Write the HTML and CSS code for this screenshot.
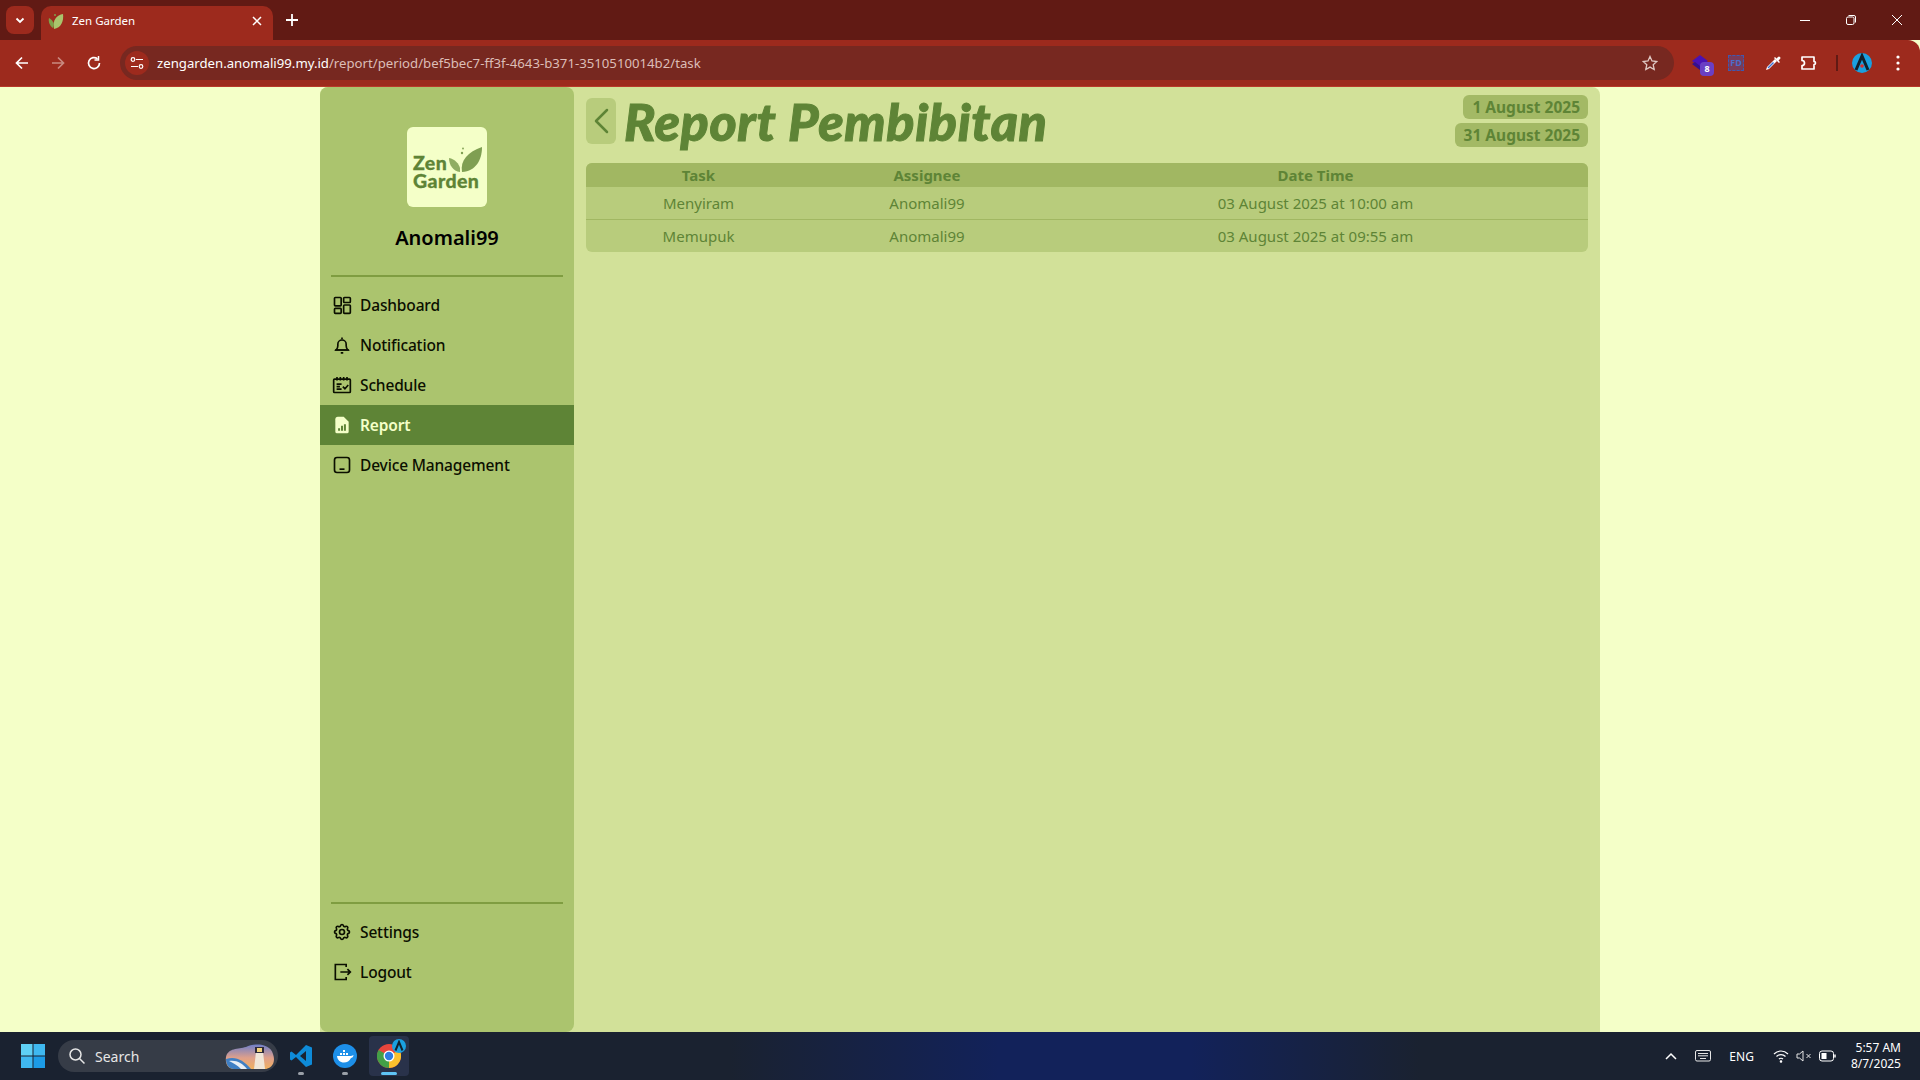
FILE: index.html
```html
<!DOCTYPE html>
<html lang="en">
<head>
    <meta charset="UTF-8">
    <meta name="viewport" content="width=device-width, initial-scale=1.0">
    <title>Zen Garden</title>
    <link rel="stylesheet" href="styles.css">
</head>
<body>
    <div class="screen">
        <div class="tab-strip">
            <button class="tab-search">
                <svg width="12" height="12" viewBox="0 0 12 12" fill="none" stroke="#fff" stroke-width="1.8"><path d="M2.5 4.5 6 8l3.5-3.5"/></svg>
            </button>
            <div class="tab">
                <svg class="tab-icon" width="18" height="18" viewBox="0 0 18 18"><path d="M7 17C14 16 17 9 16 2 10 3 5 8 7 17Z" fill="#a9c46c"/><path d="M6 16C3 14 1 10 2 6c2 1 4 3 5 6Z" fill="#7fa04a"/><circle cx="8" cy="3" r="1" fill="#7fa04a"/></svg>
                <span class="tab-title">Zen Garden</span>
                <svg class="tab-close" width="10" height="10" viewBox="0 0 10 10" stroke="#fff" stroke-width="1.5"><path d="M1 1l8 8M9 1 1 9"/></svg>
            </div>
            <svg class="new-tab" width="14" height="14" viewBox="0 0 14 14" stroke="#fff" stroke-width="1.8"><path d="M7 1v12M1 7h12"/></svg>
            <div class="window-controls">
                <svg width="12" height="12" viewBox="0 0 12 12" stroke="#fff"><path d="M1 6.5h10"/></svg>
                <svg width="12" height="12" viewBox="0 0 12 12" fill="none" stroke="#fff"><rect x="1.5" y="3" width="7.5" height="7.5" rx="1.5"/><path d="M3.5 1.5H9A1.5 1.5 0 0 1 10.500 3v5.500"/></svg>
                <svg width="12" height="12" viewBox="0 0 12 12" stroke="#fff"><path d="M1 1l10 10M11 1 1 11"/></svg>
            </div>
        </div>

        <div class="toolbar">
            <div class="nav-buttons">
                <svg width="16" height="16" viewBox="0 0 16 16" fill="none" stroke="#fff" stroke-width="1.7"><path d="M14 8H2.5M8 2.5 2.5 8 8 13.5"/></svg>
                <svg width="16" height="16" viewBox="0 0 16 16" fill="none" stroke="#c98a80" stroke-width="1.7"><path d="M2 8h11.5M8 2.5 13.5 8 8 13.5"/></svg>
                <svg width="16" height="16" viewBox="0 0 16 16" fill="none" stroke="#fff" stroke-width="1.7"><path d="M13.5 8A5.5 5.5 0 1 1 11.5 3.8"/><path d="M12.5 1v4h-4" stroke-width="1.5"/></svg>
            </div>
            <div class="address-bar">
                <span class="site-chip">
                    <svg width="14" height="14" viewBox="0 0 14 14" fill="none" stroke="#fff" stroke-width="1.2"><path d="M6 3.5h7M1 10.5h7"/><circle cx="3" cy="3.5" r="1.8"/><circle cx="11" cy="10.5" r="1.8"/></svg>
                </span>
                <span class="url"><span class="url-host">zengarden.anomali99.my.id</span>/report/period/bef5bec7-ff3f-4643-b371-3510510014b2/task</span>
                <svg class="star" width="16" height="16" viewBox="0 0 16 16" fill="none" stroke="#e0c8c3" stroke-width="1.3"><path d="M8 1.5l2 4.500 4.800.5-3.600 3.200 1 4.800L8 12.100l-4.200 2.400 1-4.800L1.200 6.500 6 6z"/></svg>
            </div>
            <div class="extensions">
                <span class="ext-stack">
                    <svg width="16" height="18" viewBox="0 0 16 18"><path d="M8 1l8 6-8 6-8-6z" fill="#4a12b4"/><path d="M0 10l8 6 8-6-3-2-5 4-5-4z" fill="#35108a"/></svg>
                    <span class="ext-badge">8</span>
                </span>
                <span class="ext-fd">FD</span>
                <svg width="18" height="18" viewBox="0 0 18 18"><path d="M3 13 11 5l2 2-8 8-3 1z" fill="#fff"/><path d="M3.5 13.5 9 8l1 1-5.5 5.5z" fill="#3f6fd0"/><path d="M11 3l1.5 1.500L14 3a1.400 1.400 0 0 1 2 2l-1.500 1.500L16 8l-1 1-5-5z" fill="#fff"/></svg>
                <svg width="18" height="18" viewBox="0 0 18 18" fill="none" stroke="#fff" stroke-width="1.7"><path d="M2 3h12v4.500a1.500 1.500 0 0 1 0 3V15H2v-3.500a2.500 2.500 0 0 0 0-5z" stroke-linejoin="round"/></svg>
                <span class="toolbar-sep"></span>
                <span class="avatar">
                    <svg width="20" height="20" viewBox="0 0 20 20" fill="none"><path d="M4 17 10 3l6 14" stroke="#10202c" stroke-width="3"/><circle cx="10" cy="13" r="1.8" fill="#e02a2a"/></svg>
                </span>
                <svg class="menu-dots" width="4" height="16" viewBox="0 0 4 16" fill="#fff"><circle cx="2" cy="2" r="1.6"/><circle cx="2" cy="8" r="1.6"/><circle cx="2" cy="14" r="1.6"/></svg>
            </div>
        </div>

        <div class="page">
            <aside class="sidebar">
                <div class="profile">
                    <div class="logo">
                        <div class="logo-text">Zen<br>Garden</div>
                        <svg class="logo-leaf" width="33" height="25" viewBox="0 0 33 25"><path d="M13 25C11 13 19 5 33 0 33 13 27 24 13 25Z" fill="#7f9f52"/><path d="M11 25C4 24 0 18 0 11c6 1 10 6 11 10z" fill="#8fad62"/><circle cx="13" cy="6" r="1.200" fill="#7f9f52"/><circle cx="14" cy="1.500" r=".9" fill="#7f9f52"/></svg>
                    </div>
                    <div class="profile-name">Anomali99</div>
                </div>
                <nav class="side-nav">
                    <a class="nav-item">
                        <svg class="nav-icon" viewBox="0 0 24 24"><rect x="3" y="3" width="8" height="10" rx="1"/><rect x="14" y="3" width="8" height="6" rx="1"/><rect x="3" y="16" width="8" height="6" rx="1"/><rect x="14" y="12" width="8" height="10" rx="1"/></svg>
                        Dashboard
                    </a>
                    <a class="nav-item">
                        <svg class="nav-icon" viewBox="0 0 24 24"><path d="M5 18h14c-1.500-1.500-2-3-2-5v-2a5 5 0 0 0-10 0v2c0 2-.5 3.500-2 5Z"/><path d="M3.500 18h17M10.500 21.500h3M12 3v2"/></svg>
                        Notification
                    </a>
                    <a class="nav-item">
                        <svg class="nav-icon" viewBox="0 0 24 24"><rect x="2" y="5" width="20" height="16" rx="1"/><path d="M6 2.500v4M10 2.500v4M14 2.500v4M18 2.500v4M5.500 11h6M5.500 14h4M5.500 17h6M13 14l2.500 2.500L19.500 12"/></svg>
                        Schedule
                    </a>
                    <a class="nav-item active">
                        <svg class="nav-icon" viewBox="0 0 24 24"><path class="icon-fill" d="M7 2h7l6 6v12a2 2 0 0 1-2 2H6a2 2 0 0 1-2-2V5a3 3 0 0 1 3-3Z"/><path class="icon-cut" d="M8.500 19v-3M12 19v-6M15.500 19v-8"/></svg>
                        Report
                    </a>
                    <a class="nav-item">
                        <svg class="nav-icon" viewBox="0 0 24 24"><rect x="3" y="3" width="18" height="18" rx="3"/><path d="M9 17h6"/></svg>
                        Device Management
                    </a>
                </nav>
                <nav class="side-nav side-nav-bottom">
                    <a class="nav-item">
                        <svg class="nav-icon" viewBox="0 0 24 24"><path d="M10.300 4.300c.4-1.700 3-1.700 3.400 0a1.700 1.700 0 0 0 2.600 1.100c1.500-.9 3.300.8 2.400 2.300a1.700 1.700 0 0 0 1 2.600c1.700.4 1.700 3 0 3.400a1.700 1.700 0 0 0-1 2.600c.9 1.500-.9 3.300-2.400 2.400a1.700 1.700 0 0 0-2.600 1c-.4 1.700-3 1.700-3.400 0a1.700 1.700 0 0 0-2.600-1c-1.500.9-3.300-.9-2.400-2.400a1.700 1.700 0 0 0-1-2.600c-1.700-.4-1.700-3 0-3.400a1.700 1.700 0 0 0 1-2.600c-.9-1.500.9-3.200 2.400-2.300a1.700 1.700 0 0 0 2.600-1.100Z"/><circle cx="12" cy="12" r="3"/></svg>
                        Settings
                    </a>
                    <a class="nav-item">
                        <svg class="nav-icon" viewBox="0 0 24 24"><path d="M17 6V3H4v18h13v-3M10 12h12M18.500 8.500 22 12l-3.500 3.500"/></svg>
                        Logout
                    </a>
                </nav>
            </aside>

            <main class="content">
                <div class="content-header">
                    <button class="back-btn">
                        <svg width="16" height="26" viewBox="0 0 16 26" fill="none" stroke="#5e8436" stroke-width="2.5" stroke-linecap="round" stroke-linejoin="round"><path d="M14 2 3 13l11 11"/></svg>
                    </button>
                    <h1 class="page-title">Report Pembibitan</h1>
                    <div class="period">
                        <span class="period-date">1 August 2025</span>
                        <span class="period-date">31 August 2025</span>
                    </div>
                </div>
                <div class="task-table">
                    <div class="task-row task-head">
                        <div>Task</div>
                        <div>Assignee</div>
                        <div>Date Time</div>
                    </div>
                    <div class="task-row">
                        <div>Menyiram</div>
                        <div>Anomali99</div>
                        <div>03 August 2025 at 10:00 am</div>
                    </div>
                    <div class="task-row">
                        <div>Memupuk</div>
                        <div>Anomali99</div>
                        <div>03 August 2025 at 09:55 am</div>
                    </div>
                </div>
            </main>
        </div>

        <footer class="taskbar">
            <svg class="win-logo" width="24" height="24" viewBox="0 0 24 24"><rect width="11.5" height="11.5" fill="#5fd0f5"/><rect x="12.5" width="11.5" height="11.5" fill="#3fb8f0"/><rect y="12.5" width="11.5" height="11.5" fill="#3fb8f0"/><rect x="12.5" y="12.5" width="11.5" height="11.5" fill="#1c9be6"/></svg>
            <div class="task-search">
                <svg width="18" height="18" viewBox="0 0 18 18" fill="none" stroke="#e6e6e6" stroke-width="1.5"><circle cx="7.5" cy="7.5" r="5.5"/><path d="m11.500 11.500 5 5"/></svg>
                <span>Search</span>
                <svg class="search-art" width="50" height="28" viewBox="0 0 50 28">
                    <defs>
                        <linearGradient id="art-sky" x1="0" y1="0" x2="0" y2="1">
                            <stop offset="0" stop-color="#6f7fc8"/>
                            <stop offset=".55" stop-color="#e0a08a"/>
                            <stop offset="1" stop-color="#f0b060"/>
                        </linearGradient>
                    </defs>
                    <path d="M1 15C3 6 13 7 21 5c8-4 24-4 27 7 3 8-1 15-9 15H9C3 27 0 22 1 15Z" fill="url(#art-sky)"/>
                    <path d="M1 17c10-3 17 1 25 10H9C4 27 1 23 1 17Z" fill="#3f7fc4"/>
                    <path d="M4 19c8-1 13 2 18 8h-6C12 23 8 21 4 19Z" fill="#e8eef5"/>
                    <path d="M31 10h7l2 17H29z" fill="#f0e6d8"/>
                    <rect x="30" y="5" width="9" height="6" fill="#2d2a3a"/>
                    <rect x="32" y="6" width="5" height="4" fill="#f3d27a"/>
                </svg>
            </div>
            <div class="task-apps">
                <div class="task-app">
                    <svg width="24" height="24" viewBox="0 0 24 24"><path d="M17 1 7 11 2.500 7.500 1 8.500v7l1.500 1L7 13l10 10 6-2.500V3.500z" fill="#0e8bd8"/><path d="M17 7v10l-6-5z" fill="#1a2230"/></svg>
                    <i class="app-dot"></i>
                </div>
                <div class="task-app">
                    <svg width="24" height="24" viewBox="0 0 24 24"><circle cx="12" cy="12" r="12" fill="#1d8fe8"/><path d="M4 12h14c1 0 2-1 2.500-1 0 2-1.500 3-2.500 3-1.500 3-4 4.500-7 4.500-4 0-6.500-2.500-7-6.500Z" fill="#fff"/><path d="M7 9h2v2H7zM10 9h2v2h-2zM13 9h2v2h-2zM10 6h2v2h-2z" fill="#fff"/></svg>
                    <i class="app-dot"></i>
                </div>
                <div class="task-app task-app-active">
                    <svg width="24" height="24" viewBox="0 0 24 24"><circle cx="12" cy="12" r="12" fill="#e8453c"/><path d="M12 12 22.400 6A12 12 0 0 1 12 24Z" fill="#fbc02d"/><path d="M12 12 12 24A12 12 0 0 1 1.600 6Z" fill="#43a047"/><circle cx="12" cy="12" r="5.500" fill="#fff"/><circle cx="12" cy="12" r="4.200" fill="#2f7de1"/></svg>
                    <span class="app-badge">
                        <svg width="12" height="12" viewBox="0 0 12 12" fill="none"><path d="M2.500 10.500 6 2l3.500 8.500" stroke="#10202c" stroke-width="2"/></svg>
                    </span>
                    <i class="app-line"></i>
                </div>
            </div>
            <div class="tray">
                <svg width="12" height="8" viewBox="0 0 12 8" fill="none" stroke="#fff" stroke-width="1.5"><path d="m1 7 5-5 5 5"/></svg>
                <svg class="tray-keyboard" width="16" height="12" viewBox="0 0 16 12" fill="none" stroke="#e6e6e6"><rect x=".5" y=".5" width="15" height="10.500" rx="1.500"/><path d="M3 3.500h10M3 5.800h10M5 8.500h6"/></svg>
                <span class="tray-lang">ENG</span>
                <div class="tray-icons">
                    <svg width="16" height="14" viewBox="0 0 16 14" fill="none" stroke="#fff" stroke-width="1.2"><path d="M1 5c4-4 10-4 14 0M3.500 7.500c2.500-2.500 6.500-2.500 9 0M6 10c1-1 3-1 4 0"/><circle cx="8" cy="12.500" r=".7" fill="#fff"/></svg>
                    <svg width="16" height="14" viewBox="0 0 16 14" fill="none" stroke="#e6e6e6"><path d="M1 5v4h2.500L7 12V2L3.500 5z"/><path d="m10.500 5 4 4M14.500 5l-4 4"/></svg>
                    <svg width="18" height="12" viewBox="0 0 18 12" fill="none" stroke="#fff"><rect x=".5" y="1" width="14" height="10" rx="2.500"/><rect x="2.500" y="3" width="5" height="6" fill="#fff" stroke="none"/><path d="M16 4.500v3" stroke-width="1.500"/></svg>
                </div>
                <div class="clock">
                    <div>5:57 AM</div>
                    <div>8/7/2025</div>
                </div>
            </div>
        </footer>
    </div>
</body>
</html>
```

FILE: styles.css
```css
* {
    box-sizing: border-box;
    margin: 0;
    padding: 0;
}

body {
    font-family: 'Noto Sans', 'Open Sans', sans-serif;
    background-color: #f4ffc8;
    overflow: hidden;
}

button {
    border: none;
}

.screen {
    display: flex;
    flex-direction: column;
    height: 100vh;
}

/* browser window */
.tab-strip {
    height: 40px;
    flex: none;
    display: flex;
    align-items: flex-end;
    padding-left: 6px;
    background-color: #611a14;
}

.tab-search {
    width: 28px;
    height: 28px;
    margin-bottom: 6px;
    border-radius: 8px;
    background-color: #9d2a1d;
    display: flex;
    align-items: center;
    justify-content: center;
}

.tab {
    width: 232px;
    height: 34px;
    margin-left: 7px;
    padding: 0 11px 5px 6px;
    border-radius: 10px 10px 0 0;
    background-color: #9d2a1d;
    color: #fff;
    font-size: 11.5px;
    display: flex;
    align-items: center;
    gap: 7px;
}

.tab-title {
    flex: 1;
}

.new-tab {
    margin: 0 0 13px 12px;
}

.window-controls {
    margin-left: auto;
    height: 40px;
    display: flex;
    align-items: center;
    gap: 34px;
    padding-right: 17px;
}

.toolbar {
    height: 47px;
    flex: none;
    display: flex;
    align-items: center;
    background-color: #9d2a1d;
    border-radius: 0 12px 0 0;
    border-bottom: 1px solid #b8392a;
}

.nav-buttons {
    width: 120px;
    flex: none;
    display: flex;
    align-items: center;
    gap: 20px;
    padding-left: 14px;
}

.address-bar {
    width: 1554px;
    height: 34px;
    flex: none;
    display: flex;
    align-items: center;
    border-radius: 17px;
    background-color: #772820;
    padding: 0 16px 0 5px;
}

.site-chip {
    width: 24px;
    height: 24px;
    flex: none;
    border-radius: 50%;
    background-color: #9d2a1d;
    display: flex;
    align-items: center;
    justify-content: center;
}

.url {
    flex: 1;
    margin-left: 8px;
    font-size: 13.2px;
    color: #dcbdb7;
}

.url-host {
    color: #fff;
}

.extensions {
    flex: 1;
    display: flex;
    align-items: center;
    gap: 18px;
    padding-left: 18px;
}

.ext-stack {
    position: relative;
    width: 16px;
    height: 18px;
}

.ext-badge {
    position: absolute;
    right: -6px;
    bottom: -4px;
    width: 14px;
    height: 14px;
    border-radius: 4px;
    background-color: #6a3fc4;
    color: #fff;
    font-size: 9px;
    font-weight: 700;
    text-align: center;
    line-height: 14px;
}

.ext-fd {
    width: 16px;
    height: 16px;
    margin: 0 2px;
    border: 1px dashed #3f58b0;
    background-color: #7a3a58;
    color: #4c6cc8;
    font-size: 9px;
    font-weight: 700;
    text-align: center;
    line-height: 14px;
}

.toolbar-sep {
    width: 2px;
    height: 16px;
    background-color: #611a14;
}

.avatar {
    width: 20px;
    height: 20px;
    margin-left: -4px;
    border-radius: 50%;
    background-color: #1aa0e0;
}

.menu-dots {
    margin-left: 6px;
}

/* page */
.page {
    flex: 1;
    width: 1280px;
    margin-left: 320px;
    display: flex;
    min-height: 0;
    border-radius: 8px 8px 0 0;
    background-color: #d2e199;
}

.sidebar {
    width: 254px;
    flex: none;
    display: flex;
    flex-direction: column;
    background-color: #abc46e;
    border-radius: 8px;
}

.profile {
    margin: 0 11px;
    padding-top: 40px;
    height: 190px;
    border-bottom: 2px solid #7f9d41;
    display: flex;
    flex-direction: column;
    align-items: center;
}

.logo {
    position: relative;
    width: 80px;
    height: 80px;
    border-radius: 6px;
    background-color: #f4ffc8;
    padding: 27px 0 0 6px;
}

.logo-text {
    color: #5e8436;
    font-family: 'Lato', 'Noto Sans', sans-serif;
    font-size: 19.5px;
    font-weight: 900;
    letter-spacing: 0.4px;
    line-height: 18px;
    -webkit-text-stroke: 0.3px #5e8436;
}

.logo-leaf {
    position: absolute;
    left: 42px;
    top: 20px;
}

.profile-name {
    margin-top: 19px;
    font-size: 20px;
    font-weight: 600;
    color: #000;
    line-height: 24px;
}

.side-nav {
    padding-top: 8px;
}

.side-nav-bottom {
    position: relative;
    margin: auto 0 40px;
}

.side-nav-bottom::before {
    content: "";
    position: absolute;
    top: -2px;
    left: 11px;
    right: 11px;
    height: 2px;
    background-color: #7f9d41;
}

.nav-item {
    height: 40px;
    display: flex;
    align-items: center;
    gap: 8px;
    padding-left: 12px;
    font-size: 15.5px;
    font-weight: 500;
    letter-spacing: -0.15px;
    color: #0b0f00;
}

.nav-item.active {
    background-color: #5e8436;
    color: #f4ffc8;
    font-weight: 600;
}

.nav-icon {
    width: 20px;
    height: 20px;
    flex: none;
    fill: none;
    stroke: currentColor;
    stroke-width: 2;
}

.nav-item.active .icon-fill {
    fill: #f4ffc8;
    stroke: none;
}

.nav-item.active .icon-cut {
    stroke: #5e8436;
    stroke-width: 2.4;
}

.content {
    flex: 1;
    padding: 11px 12px 0;
    color: #5e8436;
}

.content-header {
    display: flex;
    height: 65px;
}

.back-btn {
    width: 30px;
    height: 46px;
    border-radius: 6px;
    background-color: #b8cc7c;
    display: flex;
    align-items: center;
    justify-content: center;
}

.page-title {
    flex: 1;
    margin: -8px 0 0 8px;
    font-family: 'Lato', 'Noto Sans', sans-serif;
    font-size: 52px;
    font-weight: 900;
    font-style: italic;
    letter-spacing: 0.6px;
    line-height: 62px;
    -webkit-text-stroke: 1px #5e8436;
}

.period {
    display: flex;
    flex-direction: column;
    align-items: flex-end;
    gap: 4px;
    margin-top: -3px;
}

.period-date {
    height: 24px;
    padding: 0 8px 0 9px;
    border-radius: 6px;
    background-color: #a3b965;
    font-size: 15.5px;
    font-weight: 700;
    line-height: 24px;
}

.task-table {
    border-radius: 6px;
    overflow: hidden;
    background-color: #b8cc7c;
    font-size: 15px;
}

.task-row {
    display: grid;
    grid-template-columns: 225px 232px 1fr;
    height: 32.5px;
    align-items: center;
    text-align: center;
    border-bottom: 1px solid #a1b762;
}

.task-row:last-child {
    border-bottom: none;
}

.task-head {
    height: 24px;
    background-color: #a1b762;
    font-weight: 700;
    border-bottom: none;
}

/* taskbar */
.taskbar {
    height: 48px;
    flex: none;
    display: flex;
    align-items: center;
    padding-left: 21px;
    color: #fff;
    background: linear-gradient(90deg, #1a2230 0%, #1a2230 38%, #12225a 52%, #12225a 62%, #1a2230 74%, #1a2230 100%);
}

.task-search {
    width: 220px;
    height: 32px;
    margin-left: 13px;
    padding: 0 3px 0 10px;
    border-radius: 16px;
    background-color: #363c47;
    display: flex;
    align-items: center;
    gap: 9px;
    font-size: 14px;
    color: #e6e6e6;
}

.search-art {
    margin-left: auto;
}

.task-apps {
    display: flex;
    margin-left: 3px;
    gap: 4px;
}

.task-app {
    position: relative;
    width: 40px;
    height: 40px;
    display: flex;
    align-items: center;
    justify-content: center;
    border-radius: 4px;
}

.task-app-active {
    background-color: #29324a;
}

.app-dot {
    position: absolute;
    bottom: 1px;
    left: 17px;
    width: 6px;
    height: 3px;
    border-radius: 2px;
    background-color: #9aa0a8;
}

.app-line {
    position: absolute;
    bottom: 1px;
    left: 12px;
    width: 16px;
    height: 3px;
    border-radius: 2px;
    background-color: #5fc4f5;
}

.app-badge {
    position: absolute;
    top: 3px;
    right: 3px;
    width: 14px;
    height: 14px;
    border-radius: 50%;
    background-color: #1aa0e0;
    display: flex;
    align-items: center;
    justify-content: center;
}

.tray {
    margin-left: auto;
    display: flex;
    align-items: center;
    padding-right: 19px;
    font-size: 12px;
}

.tray-keyboard {
    margin-left: 18px;
}

.tray-lang {
    margin-left: 18px;
}

.tray-icons {
    display: flex;
    align-items: center;
    gap: 7px;
    margin-left: 19px;
}

.clock {
    margin-left: 14px;
    text-align: right;
    line-height: 16px;
}
```
